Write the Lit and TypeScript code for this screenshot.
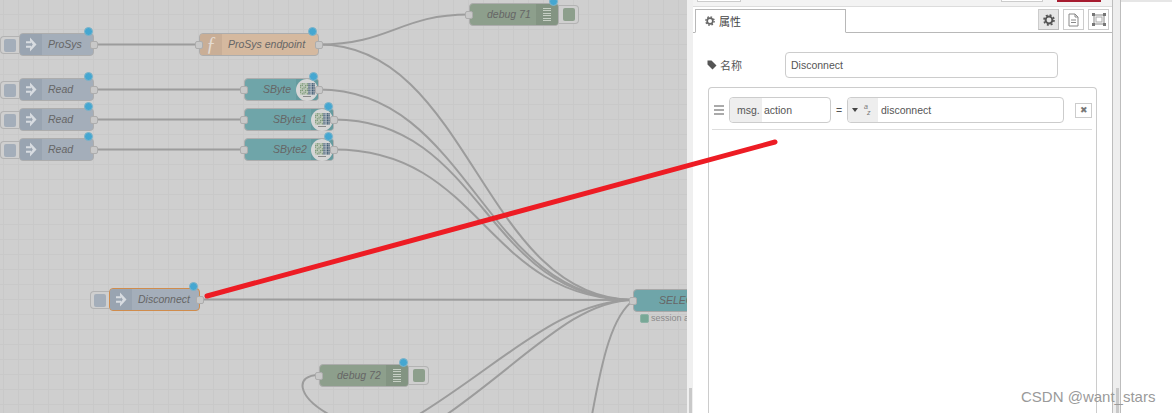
import { LitElement, html, css, svg } from "lit";
import { customElement } from "lit/decorators.js";
import { classMap } from "lit/directives/class-map.js";

type Kind = "inject" | "fn" | "teal" | "debug";
interface NodeDef {
  kind: Kind; label: string; x: number; y: number; w: number;
  selected?: boolean; dot?: number; labelX?: number; inPort?: boolean; outPort?: boolean;
}

const NODES: NodeDef[] = [
  { kind: "inject", label: "ProSys", x: 19, y: 33, w: 75, dot: 69, labelX: 28, outPort: true },
  { kind: "fn", label: "ProSys endpoint", x: 199, y: 33, w: 120, dot: 113, labelX: 28, inPort: true, outPort: true },
  { kind: "inject", label: "Read", x: 19, y: 78, w: 75, dot: 69, labelX: 28, outPort: true },
  { kind: "inject", label: "Read", x: 19, y: 108, w: 75, dot: 69, labelX: 28, outPort: true },
  { kind: "inject", label: "Read", x: 19, y: 138, w: 75, dot: 69, labelX: 28, outPort: true },
  { kind: "teal", label: "SByte", x: 244, y: 78, w: 75, dot: 69, labelX: 18, inPort: true, outPort: true },
  { kind: "teal", label: "SByte1", x: 244, y: 108, w: 90, dot: 84, labelX: 28, inPort: true, outPort: true },
  { kind: "teal", label: "SByte2", x: 244, y: 138, w: 90, dot: 84, labelX: 28, inPort: true, outPort: true },
  { kind: "debug", label: "debug 71", x: 469, y: 3, w: 90, dot: 84, labelX: 17, inPort: true },
  { kind: "inject", label: "Disconnect", x: 109, y: 288, w: 91, dot: 84, labelX: 28, selected: true, outPort: true },
  { kind: "debug", label: "debug 72", x: 319, y: 364, w: 90, dot: 84, labelX: 17, inPort: true },
];

const WIRES: string[] = [
  "M94 44.5H199",
  "M319 44.5C390 44.5 400 14.5 469 14.5",
  "M319 44.5C470 44.5 483 300 634 300",
  "M94 89.5H244", "M94 119.5H244", "M94 149.5H244",
  "M319 89.5C470 89.5 483 300 634 300",
  "M334 119.5C484 119.5 484 300 634 300",
  "M334 149.5C484 149.5 484 300 634 300",
  "M199 299.5L634 300",
  "M319 375C295 375 296 396 330 415",
  "M418 415C500 365 560 300 634 300",
  "M446 415C525 360 575 300 634 300",
  "M592 415C602 360 612 315 634 300",
];

const PIXELS = Array.from({ length: 63 }, (_, i) => {
  const col = i % 9;
  const row = Math.floor(i / 9);
  const dark = col > 4;
  return {
    x: col * 1.7,
    y: row * 1.7,
    c: dark ? (i % 3 ? "#3f5a72" : "#8499ab") : (i + row) % 3 ? "#7f9c7a" : "#b4c4ac",
  };
});

const gear = (size = 11, color = "#666") => html`<svg width=${size} height=${size} viewBox="0 0 12 12">
  <circle cx="6" cy="6" r="3.4" fill="none" stroke=${color} stroke-width="2"></circle>
  <circle cx="6" cy="6" r="5" fill="none" stroke=${color} stroke-width="1.6" stroke-dasharray="2 1.93"></circle>
</svg>`;

@customElement("app-root")
export class AppRoot extends LitElement {
  static styles = css`
    :host {
      display: flex; width: 1172px; height: 413px; overflow: hidden; position: relative;
      font-family: "Liberation Sans", "Noto Sans CJK SC", sans-serif; background: #fff;
    }
    .canvas {
      position: relative; flex: 0 0 687px; height: 413px; overflow: hidden;
      background-color: #cfcfcf;
      background-image:
        linear-gradient(#c9c9c9 1px, transparent 1px),
        linear-gradient(90deg, #c9c9c9 1px, transparent 1px);
      background-size: 15px 15px; background-position: 3px 14px;
    }
    .wires { position: absolute; left: 0; top: 0; }
    .wires path { fill: none; stroke: #9c9c9c; stroke-width: 2; }
    .node {
      position: absolute; height: 21px; border: 1px solid #adadad; border-radius: 4px;
      font-size: 10.5px; font-style: italic; color: #666; box-sizing: content-box;
    }
    .node .label { position: absolute; top: 0; line-height: 21px; white-space: nowrap; }
    .inject { background: #a4aeba; }
    .fn { background: #d5b99f; }
    .teal { background: #6fa5a9; }
    .debug { background: #8d9f8c; }
    .selected { border-color: #d08c4c; border-width: 1.5px; }
    .iconpart {
      position: absolute; top: 0; bottom: 0; width: 22px; display: flex; align-items: center;
      justify-content: center; box-sizing: border-box;
    }
    .iconpart.left { left: 0; border-radius: 3px 0 0 3px; }
    .iconpart.right { right: 0; border-radius: 0 3px 3px 0; }
    .inject .iconpart { background: #99a4b1; }
    .fn .iconpart { background: #c9ae96; }
    .debug .iconpart { background: #839482; }
    .teal .iconpart { background: #659b9f; }
    .fsym {
      font-family: "Liberation Serif", serif; font-size: 20px; color: #e4dbd2; font-style: italic;
      line-height: 21px;
    }
    .lines { display: flex; flex-direction: column; gap: 1.4px; width: 8px; }
    .lines i { display: block; height: 1px; background: #c6cfc4; }
    .badge {
      width: 22px; height: 22px; border-radius: 50%; background: #d6d6d6; display: flex;
      align-items: center; justify-content: center; flex-direction: column; gap: 1px;
    }
    .port {
      position: absolute; top: 7px; width: 6px; height: 6px; border: 1px solid #adadad;
      border-radius: 2px; background: #c8c8c8;
    }
    .port.in { left: -5px; }
    .port.out { right: -5px; }
    .dot {
      position: absolute; top: -7px; width: 7px; height: 7px; border-radius: 50%;
      background: #45a7d1; border: 1px solid #7fb4c9; margin-left: -5px;
    }
    .btn {
      position: absolute; box-sizing: border-box; border: 1px solid #b3b3b3; background: #cfcfcf;
      display: flex; align-items: center; justify-content: center;
    }
    .btn.l { border-radius: 4px 0 0 4px; border-right: none; }
    .btn.r { border-radius: 0 4px 4px 0; border-left: none; }
    .btn i { display: block; width: 12px; height: 13px; border-radius: 2px; }
    .btn.grey i { background: #a4aeba; }
    .btn.green i { background: #8d9f8c; }
    .sele {
      position: absolute; left: 633px; top: 289px; width: 90px; height: 21px; background: #6fa5a9;
      border: 1px solid #a8a8a8; border-radius: 4px; font-size: 10.5px; font-style: italic;
      color: #666; line-height: 21px; text-indent: 25px;
    }
    .status {
      position: absolute; left: 640px; top: 313px; display: flex; align-items: center; gap: 2px;
      font-size: 9px; color: #8a8a8a; white-space: nowrap;
    }
    .status i { width: 7px; height: 7px; background: #78a897; border: 1px solid #8db3a6; border-radius: 2px; }

    .gutter { flex: 0 0 6px; height: 413px; background: #efefef; display: flex; justify-content: center; align-items: flex-end; }
    .gutter i, .rgutter i { display: block; width: 3px; height: 25px; background: #c9c9c9; }
    .panel {
      flex: 0 0 420px; height: 413px; box-sizing: border-box; background: #fff;
      border-right: 1px solid #bdbdbd; display: flex; flex-direction: column; overflow: hidden;
    }
    .tray {
      flex: 0 0 6px; background: #f3f3f3; border-bottom: 1px solid #dcdcdc; display: flex;
      align-items: flex-start; padding: 0 4px; box-sizing: content-box;
    }
    .tray b { display: block; height: 2px; width: 44px; background: #fff; border: 1px solid #ccc; border-top: none; box-sizing: border-box; }
    .tray b.two { margin-left: 260px; width: 42px; }
    .tray b.red { margin-left: 14px; width: 44px; background: #a61b2f; border: none; }
    .tabs {
      flex: 0 0 26px; height: 26px; box-sizing: border-box; padding: 2px 3px 0 2px; border-bottom: 1px solid #b8b8b8;
      display: flex; justify-content: space-between; align-items: flex-start;
    }
    .tab {
      width: 151px; height: 24px; box-sizing: border-box; border: 1px solid #b8b8b8; border-bottom: 1px solid #fff;
      display: flex; align-items: center; gap: 4px; padding-left: 9px; font-size: 11px; color: #444;
    }
    .tabbtns { display: flex; gap: 4px; }
    .tabbtn {
      width: 21px; height: 21px; box-sizing: border-box; border: 1px solid #ccc; background: #fff;
      display: flex; align-items: center; justify-content: center;
    }
    .tabbtn.on { background: #e6e6e6; border-bottom-color: #bbb; border-right-color: #bbb; }
    .body { padding: 19px 15px 0 15px; display: flex; flex-direction: column; flex: 1; min-height: 0; }
    .namerow { display: flex; align-items: center; height: 26px; font-size: 11px; color: #555; }
    .namelabel { flex: 0 0 78px; display: flex; align-items: center; gap: 3px; margin-left: -1px; }
    .input {
      box-sizing: border-box; height: 26px; border: 1px solid #ccc; border-radius: 4px;
      display: flex; align-items: center; font-size: 10.5px; color: #555; background: #fff;
    }
    .nameinput { width: 273px; padding-left: 5px; }
    .formbox {
      margin-top: 9px; flex: 1; border: 1px solid #ccc; border-radius: 4px 4px 0 0; border-bottom: none;
      padding: 9px 4px 0 3px; display: flex; flex-direction: column; box-sizing: border-box;
    }
    .rulerow { display: flex; align-items: center; height: 26px; font-size: 10.5px; color: #555; }
    .handle { display: flex; flex-direction: column; gap: 2px; width: 10px; margin: 0 5px 0 2px; }
    .handle i { display: block; height: 2px; background: #aaa; }
    .typed { width: 102px; overflow: hidden; }
    .prefix { height: 100%; background: #eee; display: flex; align-items: center; box-sizing: border-box; border-radius: 3px 0 0 3px; flex: none; }
    .pmsg { width: 32px; padding-left: 7px; }
    .ptype { width: 30px; padding-left: 4px; gap: 6px; }
    .caret { width: 0; height: 0; border-left: 3.5px solid transparent; border-right: 3.5px solid transparent; border-top: 4px solid #444; }
    .az { display: block; width: 8px; height: 12px; font-size: 7px; line-height: 6px; color: #777; }
    .az span { display: block; }
    .az span + span { padding-left: 3px; }
    .eq { width: 16px; text-align: center; }
    .typed2 { width: 217px; overflow: hidden; }
    .val { padding-left: 2px; }
    .typed2 .val { padding-left: 3px; }
    .del {
      margin-left: 11px; width: 17px; height: 15px; box-sizing: border-box; border: 1px solid #ccc;
      display: flex; align-items: center; justify-content: center; font-size: 9px; color: #777; background: #fff;
    }
    .hr { margin-top: 6px; height: 1px; background: #ddd; width: 380px; }
    .rgutter { flex: 0 0 7px; height: 413px; background: #eee; display: flex; justify-content: flex-end; align-items: flex-end; padding-right: 1px; box-sizing: border-box; }
    .far { flex: 1; height: 413px; border-left: 1px solid #bdbdbd; box-sizing: border-box; background: #fff; }
    .far i { display: block; height: 2px; background: #e6e6e6; }
    .overlay { position: absolute; left: 0; top: 0; pointer-events: none; }
    .mark { position: absolute; left: 1021px; top: 388px; font-size: 15px; color: #9a9a9a; white-space: nowrap; }
  `;

  private nodeIcon(n: NodeDef) {
    if (n.kind === "inject")
      return html`<div class="iconpart left"><svg width="11" height="15" viewBox="0 0 11 15">
        <path d="M0 4.2H5V6.2H0ZM0 8.8H5V10.8H0Z" fill="#d8dce1"></path>
        <path d="M4 0.5L10.5 7.5L4 14.5V11.2L6.8 7.5L4 3.8Z" fill="#d8dce1"></path>
      </svg></div>`;
    if (n.kind === "fn") return html`<div class="iconpart left"><span class="fsym">ƒ</span></div>`;
    if (n.kind === "debug")
      return html`<div class="iconpart right"><div class="lines"><i></i><i></i><i></i><i></i><i></i><i></i></div></div>`;
    return html`<div class="iconpart right">
      <div class="badge">
        <svg width="15" height="12" viewBox="0 0 15.3 11.9">
          ${PIXELS.map((p) => svg`<rect x=${p.x} y=${p.y} width="1.4" height="1.4" fill=${p.c}></rect>`)}
        </svg>
        <svg width="8" height="1" viewBox="0 0 8 1"><rect width="8" height="1" fill="#8a8a8a"></rect></svg>
      </div>
    </div>`;
  }

  private renderNode(n: NodeDef) {
    const classes = { node: true, [n.kind]: true, selected: !!n.selected };
    return html`<div class=${classMap(classes)} style="left:${n.x}px;top:${n.y}px;width:${n.w - 2}px">
      ${this.nodeIcon(n)}
      <span class="label" style="left:${n.labelX}px">${n.label}</span>
      ${n.inPort ? html`<div class="port in"></div>` : ""}
      ${n.outPort ? html`<div class="port out"></div>` : ""}
      ${n.dot != null ? html`<div class="dot" style="left:${n.dot}px"></div>` : ""}
    </div>`;
  }

  render() {
    const buttons = [
      { x: 0, y: 36, w: 19, h: 18, c: "l grey" },
      { x: 0, y: 81, w: 19, h: 18, c: "l grey" },
      { x: 0, y: 111, w: 19, h: 18, c: "l grey" },
      { x: 0, y: 141, w: 19, h: 18, c: "l grey" },
      { x: 90, y: 291, w: 19, h: 18, c: "l grey" },
      { x: 559, y: 5, w: 20, h: 19, c: "r green" },
      { x: 409, y: 366, w: 20, h: 19, c: "r green" },
    ];
    return html`
      <div class="canvas">
        <svg class="wires" width="687" height="413">
          ${WIRES.map((d) => svg`<path d=${d}></path>`)}
        </svg>
        ${buttons.map(
          (b) => html`<div class="btn ${b.c}" style="left:${b.x}px;top:${b.y}px;width:${b.w}px;height:${b.h}px"><i></i></div>`
        )}
        ${NODES.map((n) => this.renderNode(n))}
        <div class="sele">SELECT<div class="port in"></div></div>
        <div class="status"><i></i>session active</div>
      </div>
      <div class="gutter"><i></i></div>
      <div class="panel">
        <div class="tray"><b></b><b class="two"></b><b class="red"></b></div>
        <div class="tabs">
          <div class="tab">${gear(10)}属性</div>
          <div class="tabbtns">
            <div class="tabbtn on">${gear(12, "#555")}</div>
            <div class="tabbtn">
              <svg width="11" height="14" viewBox="0 0 11 14">
                <path d="M1 1H7L10 4V13H1Z M7 1V4H10 M3 7H8 M3 9.5H8" fill="none" stroke="#888" stroke-width="1"></path>
              </svg>
            </div>
            <div class="tabbtn">
              <svg width="14" height="13" viewBox="0 0 14 13">
                <rect x="2" y="2" width="10" height="9" fill="none" stroke="#888" stroke-width="1"></rect>
                <rect x="4" y="4" width="6" height="5" fill="none" stroke="#aaa" stroke-width="1"></rect>
                <path d="M0 0h3v3h-3zM11 0h3v3h-3zM0 10h3v3h-3zM11 10h3v3h-3z" fill="#777"></path>
              </svg>
            </div>
          </div>
        </div>
        <div class="body">
          <div class="namerow">
            <div class="namelabel">
              <svg width="10" height="10" viewBox="0 0 10 10">
                <path d="M0.5 0.5H4.5L9.5 5.5L5.5 9.5L0.5 4.5Z" fill="#555"></path>
              </svg>
              名称
            </div>
            <div class="input nameinput">Disconnect</div>
          </div>
          <div class="formbox">
            <div class="rulerow">
              <div class="handle"><i></i><i></i><i></i></div>
              <div class="input typed"><div class="prefix pmsg">msg.</div><span class="val">action</span></div>
              <div class="eq">=</div>
              <div class="input typed2">
                <div class="prefix ptype"><i class="caret"></i><i class="az"><span>a</span><span>z</span></i></div>
                <span class="val">disconnect</span>
              </div>
              <div class="del">✖</div>
            </div>
            <div class="hr"></div>
          </div>
        </div>
      </div>
      <div class="rgutter"><i></i></div>
      <div class="far"><i></i></div>
      <svg class="overlay" width="1172" height="413">
        <line x1="207" y1="296" x2="775" y2="142" stroke="#ed1c24" stroke-width="5" stroke-linecap="round"></line>
      </svg>
      <div class="mark">CSDN @want_stars</div>
    `;
  }
}
